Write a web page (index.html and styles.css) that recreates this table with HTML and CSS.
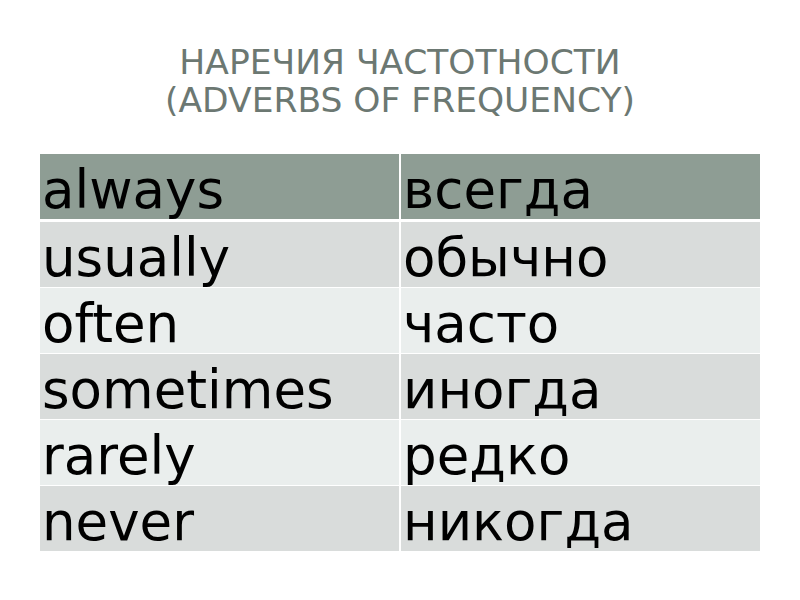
FILE: index.html
```html
<!DOCTYPE html>
<html lang="ru">
<head>
<meta charset="utf-8">
<title>Наречия частотности</title>
<link rel="stylesheet" href="styles.css">
</head>
<body>
<main class="slide">
  <h1 class="title">НАРЕЧИЯ ЧАСТОТНОСТИ<br>(ADVERBS OF FREQUENCY)</h1>
  <div class="table">
    <div class="cell head">always</div><div class="cell head">всегда</div>
    <div class="cell odd">usually</div><div class="cell odd">обычно</div>
    <div class="cell even">often</div><div class="cell even">часто</div>
    <div class="cell odd">sometimes</div><div class="cell odd">иногда</div>
    <div class="cell even">rarely</div><div class="cell even">редко</div>
    <div class="cell odd">never</div><div class="cell odd">никогда</div>
  </div>
</main>
</body>
</html>
```
FILE: styles.css
```css
html, body {
  margin: 0;
  padding: 0;
  background: #ffffff;
}
.slide {
  width: 800px;
  height: 600px;
  font-family: "DejaVu Sans", "Noto Sans", sans-serif;
  padding-top: 43px;
  box-sizing: border-box;
}
.title {
  margin: 0;
  text-align: center;
  font-weight: normal;
  font-size: 34.5px;
  line-height: 38px;
  color: #6c7872;
}
.table {
  margin: 35px 0 0 40px;
  width: 720px;
  display: grid;
  grid-template-columns: 1fr 1fr;
  grid-template-rows: 67px repeat(5, 65px);
  row-gap: 1px;
  column-gap: 2px;
  background: #ffffff;
}
.cell {
  font-size: 53px;
  line-height: 53px;
  padding: 9px 0 0 2px;
  box-sizing: border-box;
  color: #000000;
}
.head {
  background: #8e9d94;
  border-bottom: 2px solid #ffffff;
}
.odd { background: #d9dcdb; }
.even { background: #eaeeed; }
```
